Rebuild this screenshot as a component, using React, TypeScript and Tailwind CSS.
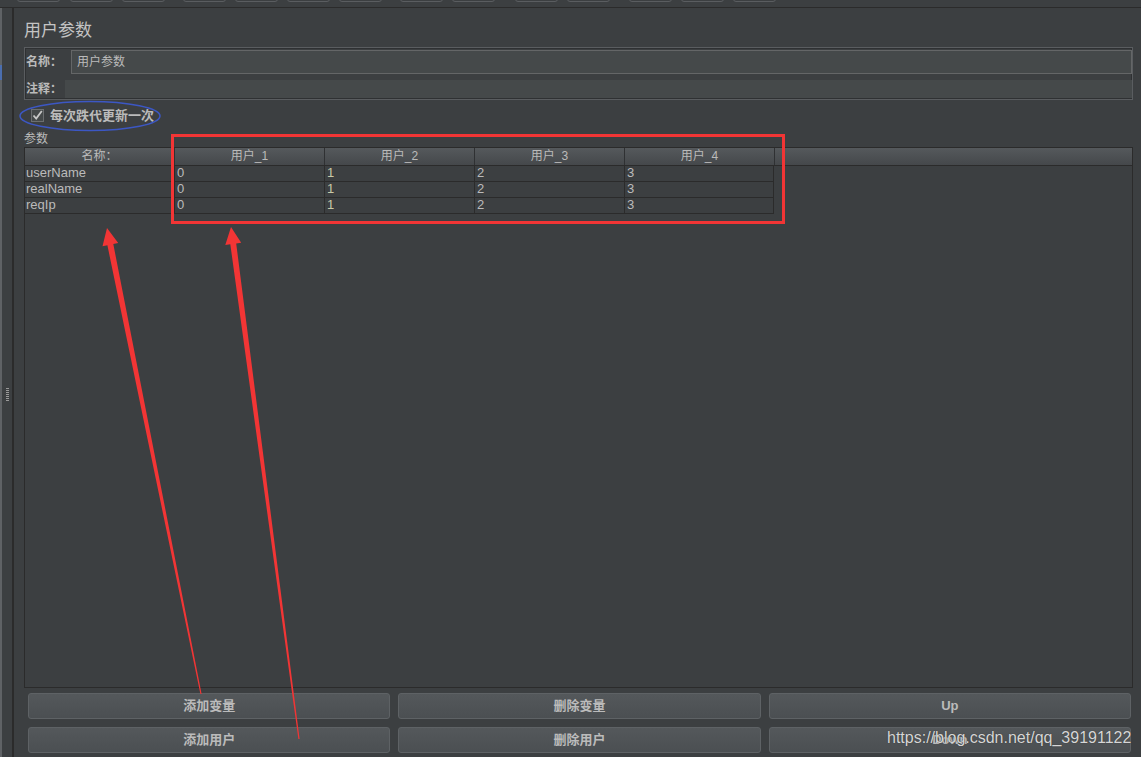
import React from "react";

const toolbarButtons = [17, 70, 122, 183, 235, 287, 339, 400, 452, 515, 567, 629, 681, 733];

const users = ["用户_1", "用户_2", "用户_3", "用户_4"];

const rows = [
  { name: "userName", values: ["0", "1", "2", "3"] },
  { name: "realName", values: ["0", "1", "2", "3"] },
  { name: "reqIp", values: ["0", "1", "2", "3"] },
];

// tapered arrow drawn from the tail (x1,y1) up to the tip (x2,y2)
function arrowPoints(x1: number, y1: number, x2: number, y2: number) {
  const dx = x2 - x1;
  const dy = y2 - y1;
  const len = Math.hypot(dx, dy);
  const ux = dx / len;
  const uy = dy / len;
  const nx = -uy;
  const ny = ux;
  const head = 17;
  const cx = x2 - ux * head;
  const cy = y2 - uy * head;
  const p = (x: number, y: number) => `${x.toFixed(1)},${y.toFixed(1)}`;
  return [
    p(x2, y2),
    p(cx + nx * 8, cy + ny * 8),
    p(cx + nx * 3, cy + ny * 3),
    p(x1 + nx * 0.6, y1 + ny * 0.6),
    p(x1 - nx * 0.6, y1 - ny * 0.6),
    p(cx - nx * 3, cy - ny * 3),
    p(cx - nx * 8, cy - ny * 8),
  ].join(" ");
}

function Btn(props: { label: string }) {
  return (
    <button className="h-[26px] flex-1 rounded-[3px] border border-[#5e6265] bg-gradient-to-b from-[#54585b] to-[#4b4f52] text-[13px] font-bold text-[#bbbbbb]">
      {props.label}
    </button>
  );
}

export default function App() {
  return (
    <div
      className="relative w-[1141px] h-[757px] overflow-hidden bg-[#3c3f41] text-[#bbbbbb]"
      style={{ fontFamily: '"Liberation Sans", "Noto Sans CJK SC", sans-serif' }}
    >
      {/* toolbar remains */}
      <div className="relative h-[7px] border-b border-[#2b2b2b] box-content">
        {toolbarButtons.map((x) => (
          <div
            key={x}
            className="absolute top-[-6px] h-[8px] w-[43px] rounded-[3px] border border-[#5a5d60]"
            style={{ left: x }}
          />
        ))}
      </div>

      <div className="flex h-[749px]">
        {/* left side strip */}
        <div className="flex w-[12px]">
          <div className="flex w-[2px] flex-col bg-[#5f6265]">
            <div className="mt-[57px] h-[15px] bg-[#4b6eaf]" />
          </div>
          <div className="flex flex-1 flex-col items-center pt-[380px]">
            <div className="flex flex-col gap-[1px]">
              {Array.from({ length: 7 }).map((_, i) => (
                <div key={i} className="h-[1px] w-[3px] bg-[#9a9a9a]" />
              ))}
            </div>
          </div>
        </div>
        <div className="w-[2px] bg-[#2b2b2b]" />

        {/* main panel */}
        <div className="flex flex-1 flex-col pl-[10px] pr-[8px]">
          <div className="h-[39px] pt-[11px] text-[17px] leading-[24px] text-[#c4c4c4]">
            用户参数
          </div>

          <div className="flex h-[53px] flex-col border border-[#5a5d60] shadow-[inset_0_0_0_1px_#2f3133]">
            <div className="mt-[2px] flex h-[24px] items-center">
              <span className="w-[46px] pl-[1px] text-[12px] font-bold">名称：</span>
              <div className="flex h-[24px] flex-1 items-center border border-[#646667] bg-[#45494a] pl-[5px] text-[12px]">
                用户参数
              </div>
            </div>
            <div className="mt-[6px] flex h-[18px] items-center">
              <span className="w-[40px] pl-[1px] text-[12px] font-bold">注释：</span>
              <div className="h-[18px] flex-1 bg-[#45494a]" />
            </div>
          </div>

          <div className="flex h-[31px] items-center pl-[7px]">
            <div className="flex h-[13px] w-[13px] items-center justify-center border border-[#6b6e70] bg-[#45494a]">
              <svg width="11" height="11" viewBox="0 0 11 11">
                <path d="M1.5 5.5 L4.2 8.6 L9.8 1" fill="none" stroke="#c8c8c8" strokeWidth="1.8" />
              </svg>
            </div>
            <span className="ml-[6px] text-[13px] font-bold">每次跌代更新一次</span>
          </div>

          <div className="h-[16px] text-[12px] leading-[16px]">参数</div>

          {/* parameters table */}
          <div className="flex h-[541px] flex-col border border-[#2b2b2b]">
            <div className="flex h-[18px] border-b border-[#2b2b2b] bg-gradient-to-b from-[#55595c] to-[#45484b] text-[12px] leading-[17px]">
              <div className="w-[149px] text-center">名称：</div>
              {users.map((u) => (
                <div key={u} className="w-[150px] border-l border-[#2f3133] text-center">
                  {u}
                </div>
              ))}
              <div className="flex-1 border-l border-[#2f3133]" />
            </div>
            {rows.map((r) => (
              <div key={r.name} className="flex h-[16px] text-[13px] leading-[14px]">
                <div className="w-[149px] border-b border-[#2b2b2b] pl-[1px]">{r.name}</div>
                {r.values.map((v, i) => (
                  <div
                    key={i}
                    className={`w-[150px] border-b border-l border-[#2b2b2b] pl-[2px] ${i === 3 ? "border-r" : ""} ${i === 1 ? "text-[#c9caa8]" : ""}`}
                  >
                    {v}
                  </div>
                ))}
              </div>
            ))}
          </div>

          <div className="mt-[5px] flex flex-col gap-[8px] pl-[4px] pr-[2px]">
            <div className="flex gap-[8px]">
              <Btn label="添加变量" />
              <Btn label="删除变量" />
              <Btn label="Up" />
            </div>
            <div className="flex gap-[8px]">
              <Btn label="添加用户" />
              <Btn label="删除用户" />
              <Btn label="Down" />
            </div>
          </div>
        </div>
      </div>

      {/* annotations */}
      <svg className="pointer-events-none absolute left-0 top-0" width="1141" height="757">
        <ellipse cx="90" cy="116" rx="70" ry="14.5" fill="none" stroke="#3c57c4" strokeWidth="1.5" />
        <rect x="172.5" y="135.5" width="611" height="87" fill="none" stroke="#f23535" strokeWidth="3" />
        <polygon points={arrowPoints(201, 694, 107, 228)} fill="#f23535" />
        <polygon points={arrowPoints(299, 739, 231, 227)} fill="#f23535" />
      </svg>
      <div className="absolute left-[887px] top-[728px] text-[16px] leading-[20px] text-[#d6d6d6] [text-shadow:0_0_1px_#2b2b2b]">
        https://blog.csdn.net/qq_39191122
      </div>
    </div>
  );
}
